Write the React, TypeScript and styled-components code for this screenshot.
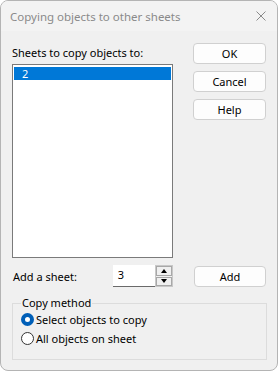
import styled, { createGlobalStyle } from 'styled-components';

const GlobalStyle = createGlobalStyle`
  html, body {
    margin: 0;
    padding: 0;
    background: #ffffff;
  }
  body {
    font-family: "Noto Sans", "Segoe UI", sans-serif;
    font-size: 11px;
    color: #000;
  }
`;

const Window = styled.div`
  width: 278px;
  height: 371px;
  box-sizing: border-box;
  border: 1px solid #b4b4b4;
  border-radius: 8px;
  background: #f0f0f0;
  overflow: hidden;
  display: flex;
  flex-direction: column;
`;

const TitleBar = styled.div`
  height: 30px;
  flex: none;
  background: #f3f3f3;
  display: flex;
  align-items: center;
  justify-content: space-between;
  padding: 0 10px 0 9px;
`;

const Title = styled.span`
  color: #8a8a8a;
  font-size: 11.5px;
`;

const CloseIcon = styled.svg`
  width: 10px;
  height: 10px;
  margin-right: 1px;
`;

const Body = styled.div`
  flex: 1;
  padding: 0 11px;
  display: flex;
  flex-direction: column;
`;

const TopRow = styled.div`
  display: flex;
  gap: 20px;
`;

const LeftCol = styled.div`
  width: 161px;
  padding-top: 14px;
  display: flex;
  flex-direction: column;
`;

const Label = styled.div`
  line-height: 16px;
  height: 16px;
  margin-bottom: 3px;
  white-space: nowrap;
`;

const ListBox = styled.div`
  height: 194px;
  box-sizing: border-box;
  border: 1px solid #7a7a7a;
  background: #fff;
  padding: 2px 1px;
`;

const ListItem = styled.div<{ $selected?: boolean }>`
  height: 13px;
  line-height: 13px;
  padding-left: 8px;
  background: ${(p) => (p.$selected ? '#0078d7' : 'transparent')};
  color: ${(p) => (p.$selected ? '#fff' : '#000')};
`;

const RightCol = styled.div`
  padding-top: 12px;
  display: flex;
  flex-direction: column;
  gap: 7px;
`;

const Button = styled.button`
  width: 73px;
  height: 21px;
  box-sizing: border-box;
  border: 1px solid #d0d0d0;
  border-radius: 4px;
  background: #fdfdfd;
  font-family: inherit;
  font-size: 11px;
  color: #000;
  padding: 0;
  line-height: 19px;
`;

const AddRow = styled.div`
  display: flex;
  align-items: center;
  margin-top: 7px;
`;

const AddLabel = styled.span`
  width: 101px;
  padding-left: 1px;
`;

const Spin = styled.div`
  display: flex;
  height: 22px;
  width: 60px;
  margin-right: 21px;
`;

const SpinInput = styled.div`
  width: 42px;
  box-sizing: border-box;
  background: #fff;
  border-bottom: 1px solid #6a6a6a;
  padding-left: 5px;
  line-height: 20px;
`;

const SpinButtons = styled.div`
  width: 18px;
  box-sizing: border-box;
  border: 1px solid #c8c8c8;
  display: flex;
  flex-direction: column;
  gap: 1px;
  background: #f0f0f0;
`;

const SpinBtn = styled.div`
  flex: 1;
  border: 1px solid #a8a8a8;
  background: #f0f0f0;
  display: flex;
  align-items: center;
  justify-content: center;
`;

const Arrow = styled.div<{ $down?: boolean }>`
  width: 0;
  height: 0;
  border-left: 3.5px solid transparent;
  border-right: 3.5px solid transparent;
  ${(p) => (p.$down ? 'border-top: 4px solid #000;' : 'border-bottom: 4px solid #000;')}
`;

const Group = styled.fieldset`
  margin: 9px 0 0 0;
  padding: 0 0 0 8px;
  height: 64px;
  box-sizing: border-box;
  border: 1px solid #dcdcdc;
  width: 255px;
`;

const Legend = styled.legend`
  padding: 0 1px;
  line-height: 14px;
`;

const Radio = styled.label`
  display: flex;
  align-items: center;
  height: 19px;
  gap: 2px;
`;

const RadioCircle = styled.span<{ $checked?: boolean }>`
  width: 13px;
  height: 13px;
  box-sizing: border-box;
  border-radius: 50%;
  border: ${(p) => (p.$checked ? '4px solid #005fb8' : '1px solid #333')};
  background: #fff;
  flex: none;
`;

export default function App() {
  return (
    <>
      <GlobalStyle />
      <Window>
        <TitleBar>
          <Title>Copying objects to other sheets</Title>
          <CloseIcon viewBox="0 0 10 10">
            <path d="M0.5 0.5 L9.5 9.5 M9.5 0.5 L0.5 9.5" stroke="#8a8a8a" strokeWidth="1" fill="none" />
          </CloseIcon>
        </TitleBar>
        <Body>
          <TopRow>
            <LeftCol>
              <Label>Sheets to copy objects to:</Label>
              <ListBox>
                <ListItem $selected>2</ListItem>
              </ListBox>
            </LeftCol>
            <RightCol>
              <Button>OK</Button>
              <Button>Cancel</Button>
              <Button>Help</Button>
            </RightCol>
          </TopRow>
          <AddRow>
            <AddLabel>Add a sheet:</AddLabel>
            <Spin>
              <SpinInput>3</SpinInput>
              <SpinButtons>
                <SpinBtn>
                  <Arrow />
                </SpinBtn>
                <SpinBtn>
                  <Arrow $down />
                </SpinBtn>
              </SpinButtons>
            </Spin>
            <Button>Add</Button>
          </AddRow>
          <Group>
            <Legend>Copy method</Legend>
            <Radio>
              <RadioCircle $checked />
              Select objects to copy
            </Radio>
            <Radio>
              <RadioCircle />
              All objects on sheet
            </Radio>
          </Group>
        </Body>
      </Window>
    </>
  );
}
